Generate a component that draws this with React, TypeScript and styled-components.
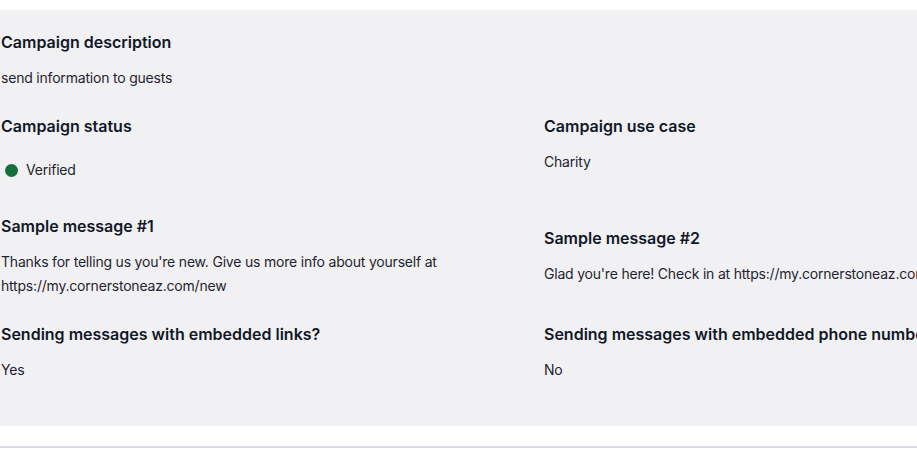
import styled, { createGlobalStyle } from "styled-components";

const Global = createGlobalStyle`
  body {
    margin: 0;
    background: #ffffff;
    font-family: Inter, "Noto Sans", sans-serif;
    overflow: hidden;
  }
`;

const App = () => {
  return (
    <>
      <Global />
      <Page>
        <Panel>
          <Row>
            <Field>
              <Label>Campaign description</Label>
              <Value>send information to guests</Value>
            </Field>
          </Row>
          <Row>
            <Field>
              <Label>Campaign status</Label>
              <Status>
                <Dot />
                Verified
              </Status>
            </Field>
            <Field>
              <Label>Campaign use case</Label>
              <Value>Charity</Value>
            </Field>
          </Row>
          <Row $center>
            <Field>
              <Label>Sample message #1</Label>
              <Value>
                Thanks for telling us you're new. Give us more info about yourself at
                https://my.cornerstoneaz.com/new
              </Value>
            </Field>
            <Field>
              <Label>Sample message #2</Label>
              <Value $nowrap>
                Glad you're here! Check in at https://my.cornerstoneaz.com/checkin
              </Value>
            </Field>
          </Row>
          <Row>
            <Field>
              <Label>Sending messages with embedded links?</Label>
              <Value>Yes</Value>
            </Field>
            <Field>
              <Label $nowrap>Sending messages with embedded phone numbers?</Label>
              <Value>No</Value>
            </Field>
          </Row>
        </Panel>
        <Divider />
      </Page>
    </>
  );
};

export default App;

const Page = styled.div`
  width: 917px;
  height: 456px;
  padding-top: 10px;
  box-sizing: border-box;
  overflow: hidden;
`;

const Panel = styled.div`
  background: #f1f1f3;
  padding: 20px 0 20px 1px;
  width: 1100px;
  display: flex;
  flex-direction: column;
`;

const Row = styled.div<{ $center?: boolean }>`
  display: grid;
  grid-template-columns: 543px 543px;
  align-items: ${(p) => (p.$center ? "center" : "start")};
  margin-bottom: 24px;
`;

const Field = styled.div`
  display: flex;
  flex-direction: column;
  gap: 12px;
  min-width: 0;
`;

const Label = styled.div<{ $nowrap?: boolean }>`
  font-size: 16px;
  line-height: 24px;
  font-weight: 600;
  color: #111827;
  white-space: ${(p) => (p.$nowrap ? "nowrap" : "normal")};
`;

const Value = styled.div<{ $nowrap?: boolean }>`
  font-size: 14px;
  line-height: 24px;
  letter-spacing: -0.2px;
  color: #1f2430;
  max-width: 470px;
  white-space: ${(p) => (p.$nowrap ? "nowrap" : "normal")};
`;

const Status = styled.div`
  display: flex;
  align-items: center;
  gap: 8px;
  padding: 8px 0 8px 4px;
  font-size: 14px;
  line-height: 24px;
  letter-spacing: -0.2px;
  color: #1f2430;
`;

const Dot = styled.span`
  width: 13px;
  height: 13px;
  border-radius: 50%;
  background: #15703a;
`;

const Divider = styled.div`
  margin-top: 20px;
  height: 2px;
  background: #d9dbe2;
`;
